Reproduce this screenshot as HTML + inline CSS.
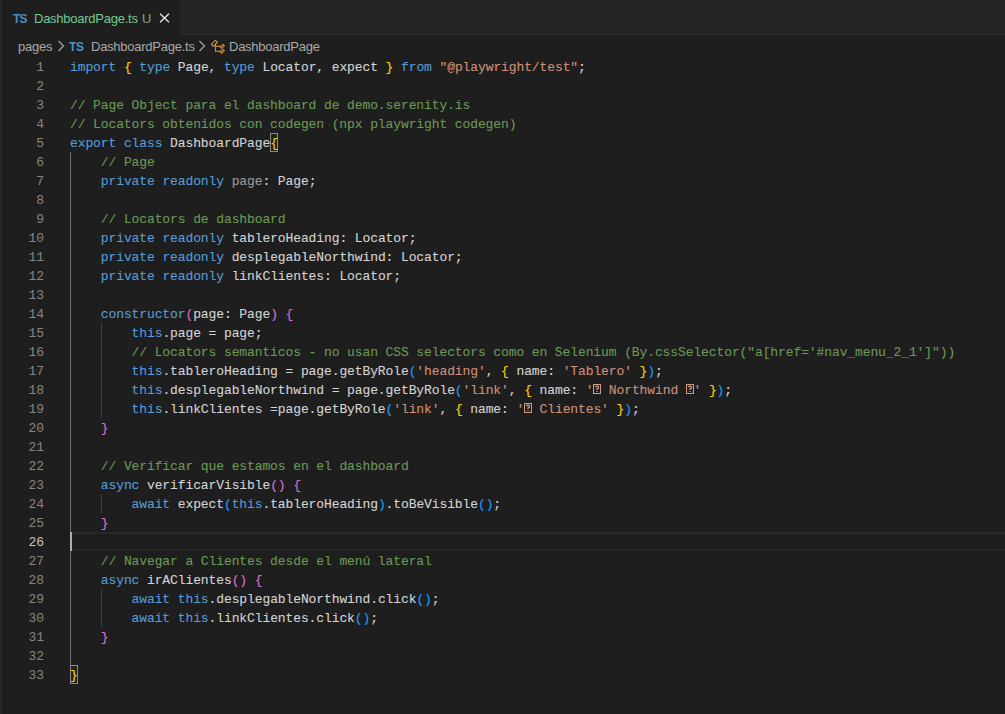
<!DOCTYPE html>
<html><head><meta charset="utf-8">
<style>
html,body{margin:0;padding:0;}
body{width:1005px;height:714px;overflow:hidden;background:#1e1e1e;position:relative;font-family:"Liberation Sans",sans-serif;}
.tabbar{position:absolute;left:0;top:0;width:1005px;height:35px;background:#252526;}
.tab{position:absolute;left:0;top:0;width:180px;height:35px;background:#1e1e1e;}
.tab .ts{position:absolute;left:13px;top:12px;font:bold 12px "Liberation Sans",sans-serif;color:#4a8cc4;letter-spacing:-0.8px;}
.tab .name{position:absolute;left:34px;top:11px;font-size:13px;color:#73c991;letter-spacing:-0.25px;}
.tab .u{position:absolute;left:142px;top:11px;font-size:13px;color:#6fae84;}
.tab .x{position:absolute;left:159px;top:13px;width:11px;height:10px;}
.crumbs{position:absolute;left:0;top:35px;height:22px;width:1005px;color:#a9a9a9;font-size:13px;}
.crumbs span{position:absolute;top:4px;letter-spacing:-0.25px;}
.code{font-family:"Liberation Mono",monospace;font-size:13px;letter-spacing:-0.105px;-webkit-text-stroke:0.1px currentColor;}
.ln{position:absolute;left:0;width:44px;text-align:right;height:19px;line-height:19px;margin-top:1px;color:#858585;font-family:"Liberation Mono",monospace;font-size:13px;}
.ln.act{color:#c6c6c6;}
.cl{position:absolute;left:70px;height:19px;line-height:19px;margin-top:1px;white-space:pre;color:#d4d4d4;font-family:"Liberation Mono",monospace;font-size:13px;letter-spacing:-0.105px;-webkit-text-stroke:0.1px currentColor;}
.k{color:#569cd6}.s{color:#ce9178}.c{color:#6a9955}.d{color:#d4d4d4}
.y{color:#ffd700}.p{color:#da70d6}.b{color:#179fff}.dim{color:#d4d4d4;opacity:.66}
.bm{}
.bmbox{position:absolute;width:6px;height:17px;border:1px solid #8a8a8a;background:rgba(0,100,0,.1);}
.tofu{display:inline-block;width:7.695px;height:19px;position:relative;vertical-align:top;}
.tofu svg{position:absolute;left:0px;top:3px;}
.guide{position:absolute;width:1px;background:#404040;}
.guide.ga{background:#707070;}
.curline{position:absolute;left:70px;top:532px;width:935px;height:15px;border-top:2px solid #282828;border-bottom:2px solid #282828;}
.cursor{position:absolute;left:70px;top:532px;width:2px;height:19px;background:#aeafad;}
</style></head><body>
<div class="tabbar"></div>
<div style="position:absolute;left:180px;top:34px;width:825px;height:1px;background:#2b2b2b"></div>
<div class="tab">
  <span class="ts">TS</span>
  <span class="name">DashboardPage.ts</span>
  <span class="u">U</span>
  <svg class="x" viewBox="0 0 11 10"><path d="M1 0.7L10 9.3M10 0.7L1 9.3" stroke="#e8e8e8" stroke-width="1.3" fill="none"/></svg>
</div>
<div class="crumbs">
  <span style="left:18px">pages</span>
  <svg style="position:absolute;left:57px;top:5px" width="8" height="12" viewBox="0 0 8 12"><path d="M1.5 1L6.5 6L1.5 11" stroke="#a9a9a9" stroke-width="1.2" fill="none"/></svg>
  <span style="left:69px;top:5px;font:bold 12px 'Liberation Sans',sans-serif;color:#4a94c8;letter-spacing:-0.3px">TS</span>
  <span style="left:91px">DashboardPage.ts</span>
  <svg style="position:absolute;left:198px;top:5px" width="8" height="12" viewBox="0 0 8 12"><path d="M1.5 1L6.5 6L1.5 11" stroke="#a9a9a9" stroke-width="1.2" fill="none"/></svg>
  <svg style="position:absolute;left:210px;top:3.5px" width="16" height="16" viewBox="0 0 16 16"><path fill="#ee9d28" d="M11.34 9.71h.71l2.67-2.67v-.71L13.38 5h-.7l-1.82 1.81h-5V5.56l1.86-1.85V3l-2-2H5L1 5v.71l2 2h.71l1.14-1.15v5.79l.5.5H10v.52l1.33 1.34h.71l2.67-2.67v-.71L13.37 10h-.7l-1.86 1.85h-5v-4H10v.48l1.34 1.38zm1.69-3.65l.63.63-2 2-.63-.63 2-2zm0 5l.63.63-2 2-.63-.63 2-2zM3.350 6.65l-1.29-1.3 3.290-3.29 1.3 1.29-3.3 3.3z"/></svg>
  <span style="left:229px">DashboardPage</span>
</div>
<div class="curline"></div>
<div style="position:absolute;left:0;top:0;width:2px;height:714px;background:#262626"></div>
<div class="bmbox" style="left:270px;top:133px"></div>
<div class="bmbox" style="left:70px;top:665px"></div>
<div class="guide ga" style="left:70px;top:152px;height:513px"></div>
<div class="guide" style="left:101px;top:323px;height:95px"></div>
<div class="guide" style="left:101px;top:494px;height:19px"></div>
<div class="guide" style="left:101px;top:589px;height:38px"></div>
<div class="ln" style="top:57px">1</div>
<div class="cl" style="top:57px"><span class="k">import</span><span class="d"> </span><span class="y">{</span><span class="d"> </span><span class="k">type</span><span class="d"> Page, </span><span class="k">type</span><span class="d"> Locator, expect </span><span class="y">}</span><span class="d"> </span><span class="k">from</span><span class="d"> </span><span class="s">"@playwright/test"</span><span class="d">;</span></div>
<div class="ln" style="top:76px">2</div>
<div class="ln" style="top:95px">3</div>
<div class="cl" style="top:95px"><span class="c">// Page Object para el dashboard de demo.serenity.is</span></div>
<div class="ln" style="top:114px">4</div>
<div class="cl" style="top:114px"><span class="c">// Locators obtenidos con codegen (npx playwright codegen)</span></div>
<div class="ln" style="top:133px">5</div>
<div class="cl" style="top:133px"><span class="k">export</span><span class="d"> </span><span class="k">class</span><span class="d"> DashboardPage</span><span class="y bm">{</span></div>
<div class="ln" style="top:152px">6</div>
<div class="cl" style="top:152px"><span class="d">    </span><span class="c">// Page</span></div>
<div class="ln" style="top:171px">7</div>
<div class="cl" style="top:171px"><span class="d">    </span><span class="k">private</span><span class="d"> </span><span class="k">readonly</span><span class="d"> </span><span class="dim">page</span><span class="d">: Page;</span></div>
<div class="ln" style="top:190px">8</div>
<div class="ln" style="top:209px">9</div>
<div class="cl" style="top:209px"><span class="d">    </span><span class="c">// Locators de dashboard</span></div>
<div class="ln" style="top:228px">10</div>
<div class="cl" style="top:228px"><span class="d">    </span><span class="k">private</span><span class="d"> </span><span class="k">readonly</span><span class="d"> tableroHeading: Locator;</span></div>
<div class="ln" style="top:247px">11</div>
<div class="cl" style="top:247px"><span class="d">    </span><span class="k">private</span><span class="d"> </span><span class="k">readonly</span><span class="d"> desplegableNorthwind: Locator;</span></div>
<div class="ln" style="top:266px">12</div>
<div class="cl" style="top:266px"><span class="d">    </span><span class="k">private</span><span class="d"> </span><span class="k">readonly</span><span class="d"> linkClientes: Locator;</span></div>
<div class="ln" style="top:285px">13</div>
<div class="ln" style="top:304px">14</div>
<div class="cl" style="top:304px"><span class="d">    </span><span class="k">constructor</span><span class="p">(</span><span class="d">page: Page</span><span class="p">)</span><span class="d"> </span><span class="p">{</span></div>
<div class="ln" style="top:323px">15</div>
<div class="cl" style="top:323px"><span class="d">        </span><span class="k">this</span><span class="d">.page = page;</span></div>
<div class="ln" style="top:342px">16</div>
<div class="cl" style="top:342px"><span class="d">        </span><span class="c">// Locators semanticos - no usan CSS selectors como en Selenium (By.cssSelector("a[href='#nav_menu_2_1']"))</span></div>
<div class="ln" style="top:361px">17</div>
<div class="cl" style="top:361px"><span class="d">        </span><span class="k">this</span><span class="d">.tableroHeading = page.getByRole</span><span class="b">(</span><span class="s">'heading'</span><span class="d">, </span><span class="y">{</span><span class="d"> name: </span><span class="s">'Tablero'</span><span class="d"> </span><span class="y">}</span><span class="b">)</span><span class="d">;</span></div>
<div class="ln" style="top:380px">18</div>
<div class="cl" style="top:380px"><span class="d">        </span><span class="k">this</span><span class="d">.desplegableNorthwind = page.getByRole</span><span class="b">(</span><span class="s">'link'</span><span class="d">, </span><span class="y">{</span><span class="d"> name: </span><span class="s">'</span><span class="tofu"><svg width="8" height="10" viewBox="0 0 8 10"><rect x="0.5" y="0.5" width="7" height="9" fill="none" stroke="#d29c84" stroke-width="1"/><path d="M2.4 3.1Q2.6 2.1 4 2.1Q5.6 2.1 5.6 3.4Q5.6 4.6 4 4.9L4 5.9M4 6.9L4 7.9" fill="none" stroke="#d8a892" stroke-width="1.2"/></svg></span><span class="s"> Northwind </span><span class="tofu"><svg width="8" height="10" viewBox="0 0 8 10"><rect x="0.5" y="0.5" width="7" height="9" fill="none" stroke="#d29c84" stroke-width="1"/><path d="M2.4 3.1Q2.6 2.1 4 2.1Q5.6 2.1 5.6 3.4Q5.6 4.6 4 4.9L4 5.9M4 6.9L4 7.9" fill="none" stroke="#d8a892" stroke-width="1.2"/></svg></span><span class="s">'</span><span class="d"> </span><span class="y">}</span><span class="b">)</span><span class="d">;</span></div>
<div class="ln" style="top:399px">19</div>
<div class="cl" style="top:399px"><span class="d">        </span><span class="k">this</span><span class="d">.linkClientes =page.getByRole</span><span class="b">(</span><span class="s">'link'</span><span class="d">, </span><span class="y">{</span><span class="d"> name: </span><span class="s">'</span><span class="tofu"><svg width="8" height="10" viewBox="0 0 8 10"><rect x="0.5" y="0.5" width="7" height="9" fill="none" stroke="#d29c84" stroke-width="1"/><path d="M2.4 3.1Q2.6 2.1 4 2.1Q5.6 2.1 5.6 3.4Q5.6 4.6 4 4.9L4 5.9M4 6.9L4 7.9" fill="none" stroke="#d8a892" stroke-width="1.2"/></svg></span><span class="s"> Clientes'</span><span class="d"> </span><span class="y">}</span><span class="b">)</span><span class="d">;</span></div>
<div class="ln" style="top:418px">20</div>
<div class="cl" style="top:418px"><span class="d">    </span><span class="p">}</span></div>
<div class="ln" style="top:437px">21</div>
<div class="ln" style="top:456px">22</div>
<div class="cl" style="top:456px"><span class="d">    </span><span class="c">// Verificar que estamos en el dashboard</span></div>
<div class="ln" style="top:475px">23</div>
<div class="cl" style="top:475px"><span class="d">    </span><span class="k">async</span><span class="d"> verificarVisible</span><span class="p">()</span><span class="d"> </span><span class="p">{</span></div>
<div class="ln" style="top:494px">24</div>
<div class="cl" style="top:494px"><span class="d">        </span><span class="k">await</span><span class="d"> expect</span><span class="b">(</span><span class="k">this</span><span class="d">.tableroHeading</span><span class="b">)</span><span class="d">.toBeVisible</span><span class="b">()</span><span class="d">;</span></div>
<div class="ln" style="top:513px">25</div>
<div class="cl" style="top:513px"><span class="d">    </span><span class="p">}</span></div>
<div class="ln act" style="top:532px">26</div>
<div class="ln" style="top:551px">27</div>
<div class="cl" style="top:551px"><span class="d">    </span><span class="c">// Navegar a Clientes desde el menú lateral</span></div>
<div class="ln" style="top:570px">28</div>
<div class="cl" style="top:570px"><span class="d">    </span><span class="k">async</span><span class="d"> irAClientes</span><span class="p">()</span><span class="d"> </span><span class="p">{</span></div>
<div class="ln" style="top:589px">29</div>
<div class="cl" style="top:589px"><span class="d">        </span><span class="k">await</span><span class="d"> </span><span class="k">this</span><span class="d">.desplegableNorthwind.click</span><span class="b">()</span><span class="d">;</span></div>
<div class="ln" style="top:608px">30</div>
<div class="cl" style="top:608px"><span class="d">        </span><span class="k">await</span><span class="d"> </span><span class="k">this</span><span class="d">.linkClientes.click</span><span class="b">()</span><span class="d">;</span></div>
<div class="ln" style="top:627px">31</div>
<div class="cl" style="top:627px"><span class="d">    </span><span class="p">}</span></div>
<div class="ln" style="top:646px">32</div>
<div class="ln" style="top:665px">33</div>
<div class="cl" style="top:665px"><span class="y bm">}</span></div>
<div class="cursor"></div>
</body></html>
